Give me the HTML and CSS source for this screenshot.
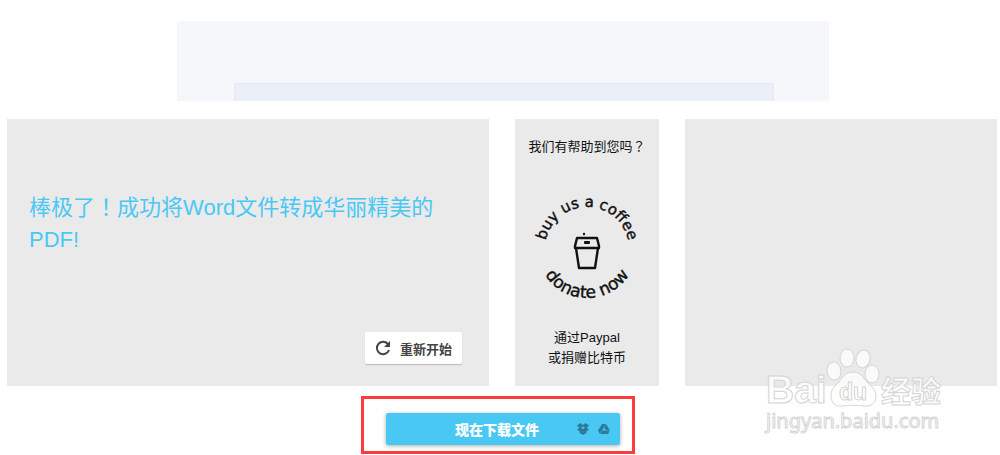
FILE: index.html
```html
<!DOCTYPE html>
<html lang="zh-CN">
<head>
<meta charset="utf-8">
<meta name="viewport" content="width=device-width, initial-scale=1">
<title>Word转PDF</title>
<link rel="stylesheet" href="styles.css">
</head>
<body>
<header class="banner"><div class="banner-slot"></div></header>
<main class="panels">
  <section class="panel result">
    <h1 class="result-title">棒极了<span class="mid-mark" lang="zh-TW">！</span>成功将Word文件转成华丽精美的PDF!</h1>
    <button class="restart" type="button">
      <svg class="restart-icon" viewBox="0 0 16 16" aria-hidden="true">
        <path d="M13.200 4.400A6.200 6.200 0 1 0 14 10" fill="none" stroke="#444" stroke-width="2"/>
        <path d="M15 1v6H9z" fill="#444"/>
      </svg>
      <span>重新开始</span>
    </button>
  </section>
  <section class="panel donate">
    <p class="donate-text">我们有帮助到您吗<span class="mid-mark" lang="zh-TW">？</span></p>
    <svg class="coffee" viewBox="0 0 120 120" role="img" aria-label="buy us a coffee, donate now">
      <defs>
        <path id="arc-top" d="M18 60a42 42 0 0 1 84 0v40"/>
        <path id="arc-bottom" d="M10 59a50 50 0 0 0 100 0"/>
      </defs>
      <text class="ring-text"><textPath href="#arc-top" startOffset="66">buy us a coffee</textPath></text>
      <text class="ring-text ring-lower"><textPath href="#arc-bottom" startOffset="50%">donate now</textPath></text>
      <g fill="none" stroke="#111" stroke-width="2.400" stroke-linejoin="round">
        <path d="M50 49h20l2 8v2H48v-2z"/>
        <path d="M49 59l3 20h16l3-20"/>
      </g>
      <rect x="57" y="52" width="6" height="3" rx="1" fill="#111"/>
      <circle cx="57" cy="45" r="1.200" fill="#111"/>
    </svg>
    <p class="donate-text">通过Paypal<br>或捐赠比特币</p>
  </section>
  <section class="panel extra">
    <svg class="watermark" viewBox="0 0 190 96" role="img" aria-label="Baidu 经验 jingyan.baidu.com">
      <g class="mark">
        <text class="mark-latin" x="7" y="56">Bai</text>
        <text class="mark-cjk" x="122" y="55">经验</text>
        <ellipse cx="75" cy="24" rx="7" ry="9" transform="rotate(-5 75 24)"/>
        <ellipse cx="88" cy="11" rx="7" ry="9"/>
        <ellipse cx="104" cy="12" rx="7" ry="9" transform="rotate(12 104 12)"/>
        <ellipse cx="113" cy="27" rx="7" ry="9"/>
        <path d="M94 25c-9 0-11 7-15 11-5 4-7 8-7 13 0 7 5 11 11 10 8-1 14-1 22 0 7 1 12-3 12-10 0-6-4-9-9-14-4-5-7-10-14-10z"/>
        <text class="mark-du" x="80" y="53">du</text>
        <text class="mark-url" x="7" y="81">jingyan.baidu.com</text>
      </g>
    </svg>
  </section>
</main>
<footer class="download-area">
  <div class="highlight">
    <div class="download-bar">
      <button class="download" type="button">现在下载文件</button>
      <button class="cloud" type="button" aria-label="Dropbox">
        <svg viewBox="0 0 12 12" aria-hidden="true"><path fill="#2b7c98" d="M3.500 0L6 2 8.500 0 12 2.500 9.800 4.700 12 6.800 8.500 9 6 7 3.500 9 0 6.800 2.200 4.700 0 2.500zM2.500 8.500l1 .6L6 7l2.500 2.100 1-.6v1.500L6 12 2.500 10z"/><path fill="#4ac8f4" d="M6 3.400L8 4.700 6 6 4 4.700z"/></svg>
      </button>
      <button class="cloud" type="button" aria-label="Google Drive">
        <svg viewBox="0 0 12 12" aria-hidden="true"><path fill="#2b7c98" fill-rule="evenodd" d="M4 1h4l4 6.500-2 3.500H2L0 7.500zM6 4.300L4 7.600h4z"/><path d="M6 4.300L8.200 1M4 7.600L2 11M8 7.600h4" stroke="#4ac8f4" stroke-width=".5"/></svg>
      </button>
    </div>
  </div>
</footer>
</body>
</html>
```
FILE: styles.css
```css
* { box-sizing: border-box; }
body {
  margin: 0;
  background: #fff;
  color: #111;
  font-family: "Liberation Sans", "Noto Sans CJK SC", sans-serif;
  font-size: 13px;
}
button { border: 0; padding: 0; font: inherit; cursor: pointer; }
.mid-mark { font-family: "Noto Sans CJK TC", sans-serif; line-height: 1; }
.banner {
  margin: 21px 17.1% 18px 17.7%;
  padding: 62px 55px 0 57px;
  background: #f5f7fb;
}
.banner-slot {
  height: 18px;
  background: #ebeff8;
  border: 1px solid #e5e8ef;
  border-bottom: 0;
  border-radius: 2px 2px 0 0;
}
.panels {
  display: grid;
  grid-template-columns: 482fr 144fr 312fr;
  gap: 26px;
  padding: 0 3px 0 7px;
}
.panel { background: #eaeaea; min-height: 267px; }
.result {
  display: flex;
  flex-direction: column;
  justify-content: space-between;
  padding: 73px 27px 22px 22px;
}
.result-title {
  margin: 0;
  color: #4ac8f4;
  font-size: 22px;
  font-weight: 400;
  line-height: 32px;
}
.restart {
  align-self: flex-end;
  display: flex;
  align-items: center;
  gap: 9px;
  height: 32px;
  padding: 0 10px;
  border-radius: 2px;
  background: #fff;
  box-shadow: 0 1px 1px #bbb;
  color: #444;
  font-weight: 700;
}
.restart-icon { width: 16px; height: 16px; }
.donate {
  display: flex;
  flex-direction: column;
  align-items: center;
  justify-content: space-between;
  padding: 18px 0 18px;
  text-align: center;
}
.donate-text { margin: 0; line-height: 20px; white-space: nowrap; }
.coffee { width: 120px; height: 120px; margin-top: 12px; }
.ring-text {
  font-family: "DejaVu Sans", sans-serif;
  font-size: 15px;
  fill: #111;
  stroke: #111;
  stroke-width: .4px;
  text-anchor: middle;
}
.ring-lower { font-size: 17px; }
.extra { position: relative; }
.watermark {
  position: absolute;
  right: 48px;
  bottom: -57px;
  width: 190px;
  height: 96px;
}
.mark {
  fill: #fff;
  fill-opacity: .75;
  stroke: #d4d4d4;
  stroke-width: 1px;
}
.mark-latin { font: 700 39px "Liberation Sans", sans-serif; }
.mark-cjk { font: 700 30px "Noto Sans CJK SC", sans-serif; }
.mark-du { font: 700 23px "Liberation Sans", sans-serif; }
.mark-url { font: 400 20px "Noto Sans", sans-serif; }
.download-area { display: flex; justify-content: center; padding: 10px 4px 0 0; }
.highlight {
  width: 274px;
  padding: 14px 12px 6px 22px;
  border: 3px solid #fb3c3a;
}
.download-bar {
  display: flex;
  align-items: center;
  gap: 9px;
  padding-right: 10px;
  border-radius: 2px;
  background: #4ac8f4;
  box-shadow: 0 1px 4px #aaa;
}
.download {
  flex: 1;
  height: 32px;
  padding-left: 40px;
  background: none;
  color: #fff;
  font-size: 14px;
  font-weight: 900;
}
.cloud { width: 12px; height: 12px; background: none; }
.cloud svg { display: block; }
```
